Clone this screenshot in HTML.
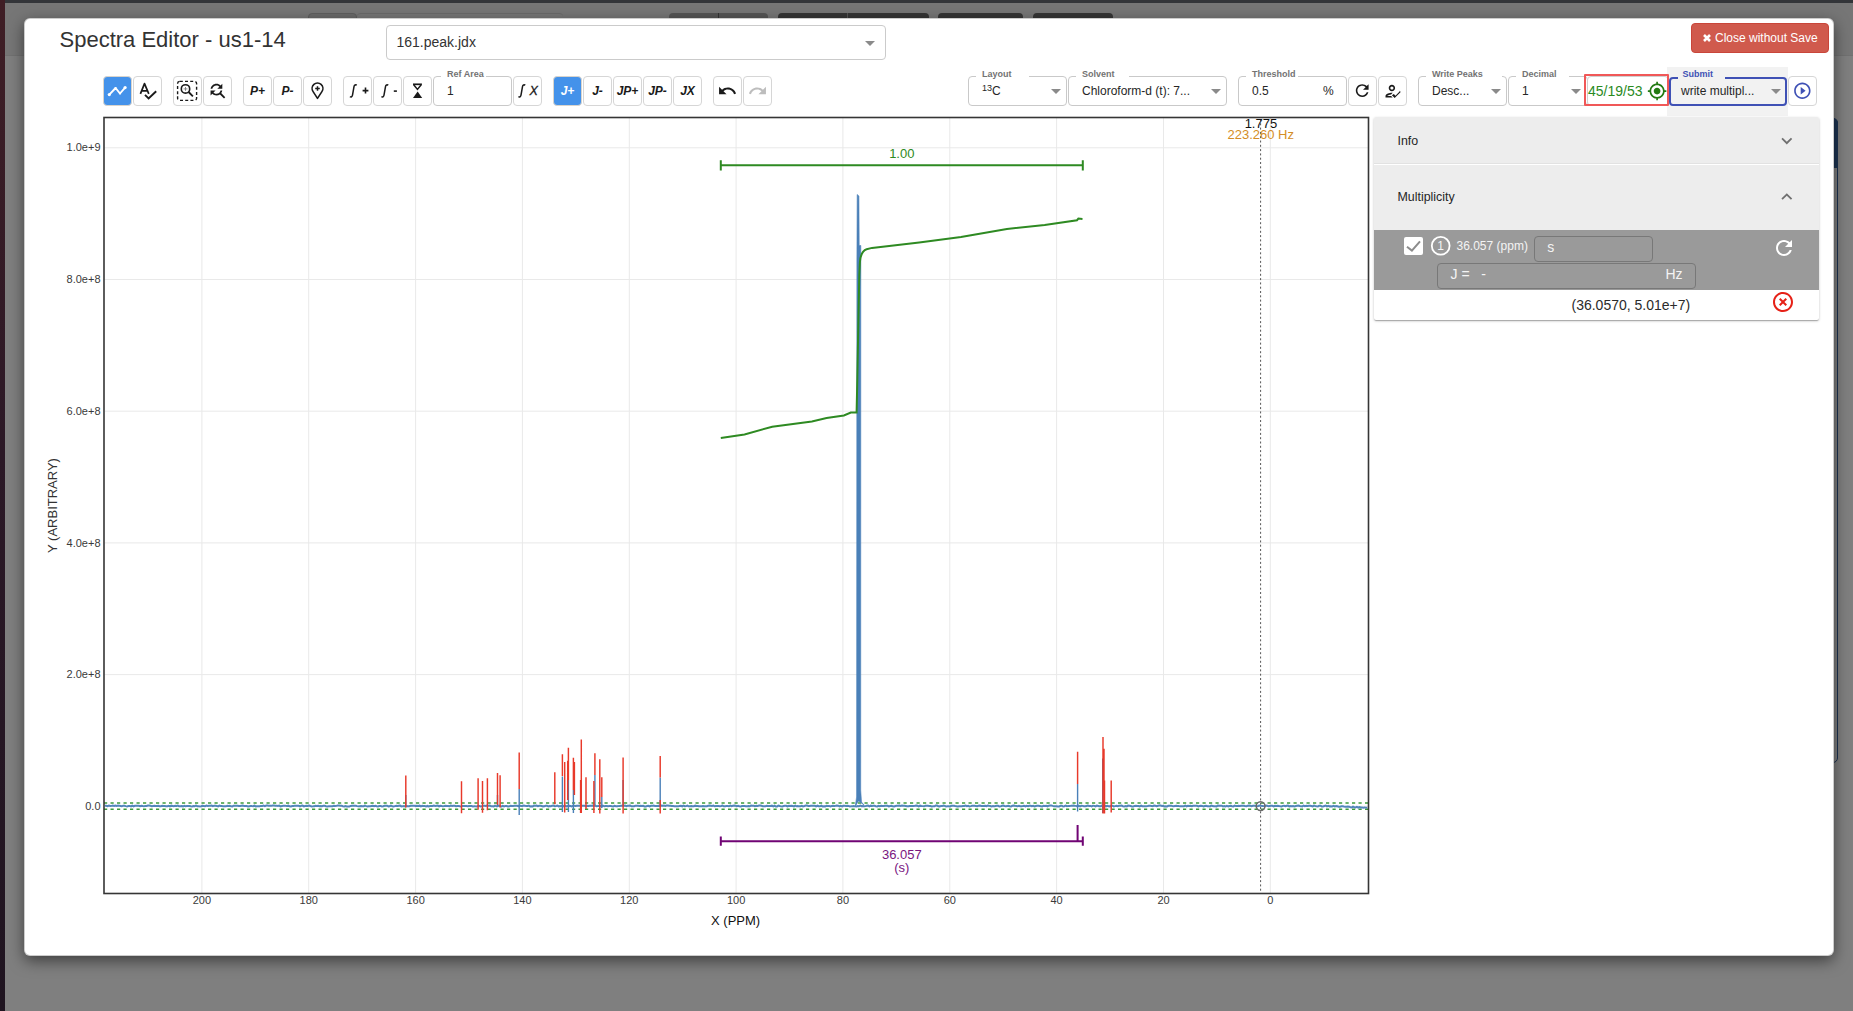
<!DOCTYPE html>
<html><head><meta charset="utf-8"><title>Spectra Editor</title>
<style>
*{box-sizing:border-box;margin:0;padding:0}
html,body{width:1853px;height:1011px;overflow:hidden}
body{position:relative;background:#7f7f7f;font-family:"Liberation Sans",sans-serif;color:#333}
.abs{position:absolute}
#lstrip{left:0;top:0;width:5px;height:1011px;background:linear-gradient(#3f1e25,#2b1826 45%,#1f1420)}
#topbar{left:5px;top:0;width:1848px;height:3px;background:#333539}
#hdrbg{left:5px;top:3px;width:1848px;height:52.5px;background:#767676;border-bottom:1px solid #717171}
.tab{top:13px;height:8px;border-radius:4px 4px 0 0}
#modal{left:24px;top:17.5px;width:1810px;height:938.5px;background:#fff;border-radius:6px;box-shadow:0 5px 15px rgba(0,0,0,.5);border:1px solid rgba(0,0,0,.2)}
#title{left:59.5px;top:26.5px;font-size:22px;line-height:25px;color:#333;white-space:nowrap}
#filesel{left:385.5px;top:24.5px;width:500px;height:35px;border:1px solid #cbcbcb;border-radius:4px;background:#fff}
#filesel span{position:absolute;left:10px;top:8px;font-size:14px;line-height:16px;color:#333}
.tri{position:absolute;width:0;height:0;border-left:5px solid transparent;border-right:5px solid transparent;border-top:5px solid #8a8a8a}
#closebtn{left:1691px;top:23px;width:138px;height:30px;background:#d05a4d;border:1px solid #c9463a;border-radius:4px;color:#fff;font-size:12px;line-height:14px}
#closebtn span{position:absolute;left:23px;top:6.5px;white-space:nowrap}

.btn{position:absolute;top:76px;width:29px;height:29.5px;border:1px solid #d6d6d6;border-radius:4px;background:#fff}
.btn svg{position:absolute;left:-1px;top:-1px}
.btn.on{background:#4492ea;border-color:#d9d4cc}
.bt{position:absolute;left:0;top:7px;width:27px;text-align:center;font:italic bold 12px/14px "Liberation Sans",sans-serif;color:#1a1a1a;white-space:nowrap}
.fld{position:absolute;top:76px;height:29.5px;border:1px solid #c9c9c9;border-radius:4px;background:#fff}
.lbl{position:absolute;top:-8px;font:bold 9px/10px "Liberation Sans",sans-serif;color:#737373;background:#fff;white-space:nowrap}
.notch{position:absolute;top:-2px;height:3px;background:#fff}
.val{position:absolute;top:7px;font:12px/14px "Liberation Sans",sans-serif;color:#262626;white-space:nowrap}
</style></head>
<body>
<div id="lstrip" class="abs"></div>
<div id="topbar" class="abs"></div>
<div id="hdrbg" class="abs"></div>
<div class="abs tab" style="left:308px;width:49px;background:#6a6a6a;border:1px solid #5e5e5e"></div>
<div class="abs tab" style="left:357px;width:206px;background:#777;border-top:1px solid #6a6a6a"></div>
<div class="abs tab" style="left:669px;width:99px;background:#555;background-image:linear-gradient(90deg,transparent 49.5px,#333 49.5px,#333 50.5px,transparent 50.5px)"></div>
<div class="abs tab" style="left:778px;width:151px;background:#353535;background-image:linear-gradient(90deg,transparent 69px,#555 69px,#555 70px,transparent 70px)"></div>
<div class="abs tab" style="left:938px;width:85px;background:#353535"></div>
<div class="abs tab" style="left:1033px;width:80px;background:#353535"></div>

<div class="abs" style="left:1700px;top:117.5px;width:137.8px;height:645px;border:1.5px solid #1d3453;border-radius:5px"></div>
<div class="abs" style="left:1700px;top:117.5px;width:137.8px;height:50.5px;background:#1d3453;border-radius:5px 5px 0 0"></div>
<div id="modal" class="abs"></div>
<div id="title" class="abs">Spectra Editor - us1-14</div>
<div id="filesel" class="abs"><span>161.peak.jdx</span><i class="tri" style="left:478px;top:15px"></i></div>
<div id="closebtn" class="abs"><svg style="position:absolute;left:10.5px;top:10px" width="8" height="8" viewBox="0 0 8 8"><path d="M1 1L7 7M7 1L1 7" stroke="#fff" stroke-width="2.6" stroke-linecap="butt"/></svg><span>Close without Save</span></div>

<!-- plot -->
<svg class="abs" style="left:0;top:0" width="1853" height="1011" viewBox="0 0 1853 1011">
<path d="M1270.3,118.0V893.0M1163.5,118.0V893.0M1056.6,118.0V893.0M949.8,118.0V893.0M842.9,118.0V893.0M736.1,118.0V893.0M629.3,118.0V893.0M522.4,118.0V893.0M415.6,118.0V893.0M308.7,118.0V893.0M201.9,118.0V893.0M104.5,806.3H1368.0M104.5,674.6H1368.0M104.5,542.9H1368.0M104.5,411.2H1368.0M104.5,279.5H1368.0M104.5,147.8H1368.0" stroke="#e9e9e9" stroke-width="1" fill="none"/>
<g font-family="Liberation Sans" font-size="11" fill="#3a3a3a" text-anchor="middle"><text x="1270.3" y="904">0</text><text x="1163.5" y="904">20</text><text x="1056.6" y="904">40</text><text x="949.8" y="904">60</text><text x="842.9" y="904">80</text><text x="736.1" y="904">100</text><text x="629.3" y="904">120</text><text x="522.4" y="904">140</text><text x="415.6" y="904">160</text><text x="308.7" y="904">180</text><text x="201.9" y="904">200</text></g>
<g font-family="Liberation Sans" font-size="11" fill="#3a3a3a" text-anchor="end"><text x="100.5" y="809.9">0.0</text><text x="100.5" y="678.2">2.0e+8</text><text x="100.5" y="546.5">4.0e+8</text><text x="100.5" y="414.8">6.0e+8</text><text x="100.5" y="283.1">8.0e+8</text><text x="100.5" y="151.4">1.0e+9</text></g>
<text x="735.6" y="924.6" font-family="Liberation Sans" font-size="13" fill="#111" text-anchor="middle">X (PPM)</text>
<text transform="translate(57.4,505.5) rotate(-90)" font-family="Liberation Sans" font-size="13" fill="#333" text-anchor="middle">Y (ARBITRARY)</text>
<path d="M104,803.1H1368.5M104,809.3H1368.5" stroke="#3d9a3d" stroke-width="1.5" stroke-dasharray="3.2,3.3" fill="none"/>
<polyline points="105.0,805.84 106.3,805.69 107.6,806.14 108.9,805.62 110.2,806.03 111.5,805.88 112.8,805.60 114.1,806.01 115.4,805.58 116.7,805.94 118.0,805.61 119.3,805.63 120.6,805.93 121.9,806.29 123.2,805.66 124.5,805.75 125.8,806.11 127.1,806.40 128.4,806.07 129.7,805.91 131.0,806.43 132.3,805.59 133.6,806.32 134.9,805.81 136.2,805.68 137.5,805.66 138.8,805.83 140.1,806.28 141.4,805.71 142.7,806.07 144.0,806.13 145.3,805.89 146.6,806.04 147.9,805.61 149.2,805.60 150.5,805.74 151.8,806.16 153.1,805.93 154.4,805.83 155.7,806.08 157.0,805.96 158.3,805.82 159.6,806.26 160.9,806.18 162.2,805.77 163.5,806.07 164.8,806.02 166.1,806.34 167.4,806.21 168.7,805.81 170.0,806.43 171.3,805.66 172.6,805.93 173.9,806.23 175.2,805.69 176.5,805.99 177.8,805.59 179.1,806.15 180.4,806.24 181.7,806.07 183.0,806.34 184.3,805.83 185.6,806.18 186.9,806.08 188.2,806.07 189.5,805.96 190.8,806.31 192.1,806.40 193.4,805.98 194.7,806.15 196.0,805.60 197.3,806.18 198.6,806.13 199.9,806.44 201.2,806.29 202.5,805.81 203.8,805.90 205.1,806.15 206.4,805.57 207.7,805.97 209.0,805.70 210.3,805.66 211.6,805.60 212.9,806.24 214.2,805.67 215.5,805.77 216.8,805.90 218.1,806.33 219.4,805.62 220.7,805.95 222.0,806.04 223.3,806.35 224.6,806.29 225.9,806.33 227.2,805.80 228.5,805.92 229.8,805.87 231.1,806.35 232.4,806.41 233.7,805.69 235.0,805.71 236.3,805.76 237.6,805.76 238.9,805.99 240.2,806.08 241.5,805.79 242.8,805.55 244.1,805.93 245.4,805.88 246.7,806.06 248.0,806.41 249.3,806.17 250.6,806.01 251.9,806.11 253.2,806.16 254.5,805.60 255.8,806.36 257.1,806.25 258.4,806.34 259.7,806.27 261.0,805.90 262.3,805.91 263.6,805.64 264.9,806.12 266.2,805.61 267.5,805.61 268.8,805.74 270.1,805.70 271.4,805.86 272.7,805.60 274.0,805.55 275.3,805.69 276.6,805.64 277.9,805.88 279.2,805.57 280.5,806.34 281.8,806.10 283.1,805.68 284.4,805.78 285.7,805.86 287.0,805.88 288.3,805.66 289.6,806.31 290.9,806.44 292.2,805.97 293.5,805.99 294.8,805.63 296.1,805.64 297.4,805.86 298.7,805.79 300.0,806.30 301.3,805.70 302.6,805.57 303.9,806.41 305.2,806.03 306.5,805.68 307.8,806.04 309.1,805.57 310.4,806.03 311.7,806.43 313.0,806.33 314.3,806.18 315.6,805.79 316.9,805.88 318.2,805.70 319.5,806.24 320.8,806.03 322.1,806.25 323.4,805.85 324.7,805.75 326.0,806.28 327.3,806.44 328.6,806.32 329.9,806.28 331.2,806.29 332.5,806.22 333.8,805.75 335.1,806.02 336.4,805.87 337.7,805.58 339.0,805.58 340.3,805.80 341.6,805.78 342.9,806.17 344.2,806.41 345.5,805.95 346.8,806.39 348.1,806.44 349.4,806.41 350.7,805.88 352.0,805.75 353.3,805.75 354.6,805.73 355.9,805.73 357.2,806.11 358.5,806.36 359.8,806.31 361.1,805.98 362.4,806.14 363.7,806.27 365.0,805.63 366.3,806.14 367.6,806.37 368.9,806.25 370.2,806.23 371.5,805.98 372.8,805.71 374.1,806.26 375.4,805.85 376.7,806.27 378.0,806.42 379.3,805.91 380.6,805.91 381.9,806.40 383.2,806.20 384.5,805.70 385.8,805.66 387.1,805.69 388.4,806.36 389.7,806.28 391.0,805.68 392.3,806.29 393.6,806.43 394.9,806.14 396.2,805.87 397.5,806.04 398.8,805.67 400.1,805.56 401.4,806.42 402.7,806.13 404.0,806.02 405.3,806.39 406.6,805.94 407.9,806.33 409.2,806.29 410.5,805.74 411.8,805.78 413.1,805.81 414.4,805.77 415.7,806.08 417.0,805.78 418.3,805.93 419.6,805.67 420.9,806.37 422.2,805.87 423.5,805.96 424.8,806.08 426.1,806.36 427.4,805.93 428.7,806.38 430.0,806.00 431.3,806.03 432.6,806.02 433.9,805.57 435.2,805.95 436.5,805.71 437.8,805.55 439.1,806.27 440.4,805.71 441.7,805.98 443.0,806.20 444.3,806.05 445.6,805.84 446.9,806.02 448.2,806.05 449.5,806.26 450.8,805.65 452.1,806.05 453.4,805.77 454.7,805.80 456.0,806.25 457.3,806.01 458.6,806.06 459.9,806.23 461.2,806.37 462.5,805.95 463.8,806.10 465.1,806.00 466.4,806.01 467.7,806.17 469.0,805.96 470.3,806.03 471.6,805.98 472.9,806.40 474.2,806.18 475.5,806.34 476.8,806.40 478.1,805.78 479.4,806.05 480.7,806.40 482.0,806.31 483.3,805.67 484.6,805.66 485.9,805.95 487.2,805.62 488.5,805.77 489.8,805.62 491.1,806.15 492.4,806.26 493.7,806.36 495.0,805.69 496.3,806.19 497.6,806.14 498.9,805.68 500.2,806.34 501.5,806.42 502.8,805.75 504.1,806.41 505.4,805.91 506.7,805.99 508.0,806.44 509.3,806.30 510.6,805.70 511.9,805.94 513.2,806.01 514.5,805.86 515.8,805.73 517.1,805.84 518.4,806.20 519.7,805.57 521.0,806.05 522.3,805.95 523.6,805.57 524.9,805.85 526.2,806.11 527.5,806.01 528.8,805.61 530.1,806.44 531.4,806.26 532.7,806.42 534.0,805.64 535.3,805.79 536.6,805.59 537.9,806.25 539.2,805.79 540.5,805.67 541.8,805.93 543.1,806.37 544.4,806.29 545.7,805.78 547.0,805.68 548.3,806.38 549.6,806.06 550.9,806.18 552.2,805.63 553.5,805.60 554.8,806.17 556.1,805.93 557.4,805.62 558.7,806.39 560.0,806.12 561.3,806.27 562.6,805.63 563.9,806.32 565.2,805.61 566.5,806.33 567.8,805.96 569.1,805.86 570.4,806.05 571.7,806.38 573.0,805.79 574.3,805.67 575.6,806.02 576.9,805.76 578.2,805.65 579.5,805.70 580.8,805.60 582.1,805.73 583.4,805.83 584.7,805.82 586.0,806.23 587.3,805.81 588.6,806.00 589.9,805.71 591.2,805.86 592.5,805.57 593.8,805.78 595.1,805.56 596.4,806.21 597.7,806.05 599.0,805.72 600.3,805.98 601.6,806.39 602.9,805.65 604.2,806.29 605.5,805.94 606.8,806.00 608.1,806.30 609.4,805.90 610.7,806.01 612.0,806.17 613.3,806.43 614.6,805.86 615.9,806.30 617.2,806.19 618.5,806.12 619.8,805.91 621.1,805.86 622.4,805.60 623.7,805.67 625.0,805.61 626.3,806.22 627.6,805.78 628.9,805.70 630.2,805.63 631.5,806.31 632.8,806.33 634.1,806.15 635.4,805.80 636.7,805.77 638.0,805.81 639.3,805.96 640.6,805.69 641.9,805.95 643.2,805.79 644.5,806.42 645.8,806.43 647.1,806.04 648.4,805.77 649.7,806.42 651.0,805.83 652.3,805.87 653.6,805.55 654.9,805.89 656.2,805.98 657.5,806.00 658.8,805.73 660.1,806.00 661.4,805.55 662.7,805.79 664.0,805.63 665.3,805.91 666.6,805.59 667.9,805.57 669.2,805.82 670.5,805.76 671.8,806.08 673.1,806.03 674.4,806.23 675.7,806.14 677.0,806.19 678.3,806.34 679.6,805.90 680.9,805.84 682.2,806.44 683.5,805.68 684.8,806.20 686.1,806.13 687.4,805.59 688.7,806.30 690.0,806.35 691.3,806.11 692.6,806.21 693.9,806.28 695.2,805.68 696.5,806.02 697.8,806.00 699.1,806.30 700.4,806.27 701.7,806.29 703.0,806.08 704.3,806.35 705.6,806.16 706.9,806.17 708.2,805.76 709.5,805.58 710.8,805.67 712.1,805.87 713.4,805.64 714.7,806.30 716.0,806.05 717.3,806.11 718.6,806.11 719.9,806.16 721.2,805.99 722.5,805.55 723.8,806.27 725.1,806.22 726.4,806.00 727.7,806.03 729.0,806.14 730.3,805.61 731.6,806.21 732.9,805.78 734.2,805.62 735.5,805.79 736.8,806.21 738.1,805.73 739.4,806.22 740.7,806.43 742.0,805.99 743.3,805.89 744.6,805.98 745.9,806.17 747.2,806.24 748.5,806.11 749.8,806.13 751.1,805.62 752.4,805.68 753.7,805.78 755.0,806.22 756.3,805.82 757.6,806.06 758.9,805.56 760.2,805.60 761.5,805.79 762.8,806.15 764.1,806.17 765.4,806.16 766.7,805.81 768.0,806.01 769.3,805.97 770.6,805.97 771.9,805.66 773.2,806.35 774.5,805.73 775.8,806.43 777.1,806.39 778.4,805.57 779.7,805.96 781.0,806.29 782.3,806.42 783.6,805.95 784.9,805.79 786.2,805.74 787.5,806.40 788.8,805.74 790.1,806.07 791.4,805.68 792.7,806.02 794.0,806.41 795.3,805.67 796.6,806.29 797.9,806.01 799.2,806.35 800.5,806.18 801.8,805.76 803.1,806.36 804.4,805.99 805.7,805.57 807.0,805.55 808.3,805.99 809.6,805.96 810.9,805.82 812.2,805.68 813.5,805.86 814.8,805.83 816.1,806.31 817.4,805.55 818.7,806.23 820.0,806.31 821.3,805.66 822.6,806.38 823.9,806.19 825.2,806.36 826.5,805.81 827.8,805.88 829.1,805.90 830.4,806.45 831.7,806.08 833.0,805.87 834.3,805.94 835.6,805.80 836.9,805.59 838.2,805.64 839.5,806.30 840.8,805.81 842.1,806.39 843.4,805.77 844.7,805.79 846.0,806.01 847.3,805.72 848.6,805.89 849.9,806.41 851.2,806.35 852.5,806.28 853.8,806.12 855.1,806.37 856.4,806.40 857.7,806.04 859.0,806.20 860.3,805.59 861.6,806.21 862.9,805.96 864.2,806.23 865.5,806.13 866.8,805.81 868.1,805.59 869.4,806.38 870.7,805.66 872.0,805.97 873.3,805.86 874.6,805.82 875.9,806.22 877.2,806.43 878.5,805.78 879.8,806.14 881.1,805.82 882.4,806.05 883.7,805.90 885.0,805.70 886.3,805.70 887.6,805.74 888.9,806.37 890.2,806.00 891.5,805.75 892.8,806.37 894.1,806.45 895.4,805.95 896.7,805.68 898.0,805.72 899.3,805.63 900.6,805.86 901.9,805.63 903.2,805.77 904.5,805.78 905.8,806.06 907.1,806.35 908.4,806.22 909.7,805.92 911.0,805.92 912.3,806.02 913.6,805.89 914.9,805.85 916.2,805.61 917.5,805.80 918.8,806.42 920.1,805.66 921.4,806.00 922.7,806.12 924.0,806.33 925.3,805.74 926.6,805.79 927.9,805.77 929.2,805.91 930.5,805.95 931.8,806.41 933.1,806.31 934.4,806.34 935.7,805.57 937.0,805.58 938.3,806.19 939.6,806.36 940.9,805.98 942.2,806.08 943.5,805.55 944.8,805.90 946.1,806.38 947.4,806.29 948.7,806.32 950.0,806.43 951.3,805.77 952.6,805.65 953.9,805.69 955.2,806.02 956.5,806.16 957.8,806.40 959.1,806.20 960.4,806.13 961.7,806.24 963.0,805.96 964.3,806.05 965.6,805.59 966.9,806.25 968.2,805.76 969.5,806.38 970.8,806.13 972.1,805.82 973.4,805.67 974.7,805.78 976.0,806.12 977.3,806.18 978.6,805.65 979.9,805.61 981.2,806.02 982.5,806.07 983.8,805.90 985.1,805.75 986.4,806.09 987.7,805.56 989.0,805.82 990.3,805.96 991.6,806.41 992.9,806.13 994.2,806.35 995.5,805.98 996.8,805.76 998.1,805.77 999.4,806.41 1000.7,806.18 1002.0,805.83 1003.3,805.57 1004.6,806.00 1005.9,806.16 1007.2,805.93 1008.5,805.78 1009.8,806.15 1011.1,806.38 1012.4,805.75 1013.7,805.58 1015.0,805.85 1016.3,805.93 1017.6,806.16 1018.9,805.73 1020.2,806.27 1021.5,806.22 1022.8,806.00 1024.1,805.73 1025.4,806.42 1026.7,805.83 1028.0,806.29 1029.3,805.76 1030.6,805.75 1031.9,806.23 1033.2,805.82 1034.5,806.41 1035.8,806.00 1037.1,805.72 1038.4,805.75 1039.7,805.93 1041.0,806.15 1042.3,806.40 1043.6,805.68 1044.9,805.90 1046.2,805.74 1047.5,806.43 1048.8,805.68 1050.1,805.60 1051.4,805.60 1052.7,805.90 1054.0,806.36 1055.3,806.35 1056.6,806.21 1057.9,806.45 1059.2,806.39 1060.5,805.85 1061.8,805.72 1063.1,806.39 1064.4,806.22 1065.7,805.58 1067.0,806.15 1068.3,805.89 1069.6,805.89 1070.9,805.85 1072.2,805.70 1073.5,805.55 1074.8,805.80 1076.1,805.87 1077.4,806.41 1078.7,805.66 1080.0,806.42 1081.3,805.74 1082.6,805.87 1083.9,806.29 1085.2,806.29 1086.5,805.94 1087.8,805.59 1089.1,805.98 1090.4,805.89 1091.7,806.38 1093.0,805.72 1094.3,805.88 1095.6,806.36 1096.9,805.58 1098.2,805.92 1099.5,806.28 1100.8,806.24 1102.1,805.59 1103.4,805.58 1104.7,805.61 1106.0,806.38 1107.3,805.78 1108.6,806.22 1109.9,806.36 1111.2,805.86 1112.5,805.80 1113.8,806.41 1115.1,806.11 1116.4,805.79 1117.7,806.19 1119.0,805.83 1120.3,805.80 1121.6,805.55 1122.9,806.23 1124.2,806.37 1125.5,806.12 1126.8,806.40 1128.1,805.57 1129.4,805.76 1130.7,805.98 1132.0,806.41 1133.3,806.41 1134.6,805.90 1135.9,805.78 1137.2,805.94 1138.5,805.99 1139.8,806.39 1141.1,805.71 1142.4,806.27 1143.7,806.21 1145.0,806.29 1146.3,806.25 1147.6,806.10 1148.9,805.85 1150.2,805.84 1151.5,805.88 1152.8,806.25 1154.1,805.62 1155.4,805.73 1156.7,806.23 1158.0,805.77 1159.3,805.61 1160.6,805.58 1161.9,806.05 1163.2,805.84 1164.5,806.43 1165.8,806.35 1167.1,806.44 1168.4,805.79 1169.7,805.63 1171.0,805.64 1172.3,806.00 1173.6,806.19 1174.9,805.95 1176.2,805.76 1177.5,805.93 1178.8,806.11 1180.1,806.16 1181.4,806.22 1182.7,806.31 1184.0,806.15 1185.3,805.66 1186.6,806.31 1187.9,805.81 1189.2,806.06 1190.5,805.89 1191.8,806.21 1193.1,805.73 1194.4,805.77 1195.7,805.77 1197.0,805.69 1198.3,806.35 1199.6,806.07 1200.9,805.84 1202.2,805.91 1203.5,806.44 1204.8,806.01 1206.1,805.76 1207.4,806.28 1208.7,806.14 1210.0,806.44 1211.3,805.64 1212.6,805.98 1213.9,806.29 1215.2,806.31 1216.5,806.37 1217.8,805.59 1219.1,805.81 1220.4,805.66 1221.7,805.72 1223.0,806.43 1224.3,806.07 1225.6,806.39 1226.9,805.89 1228.2,806.33 1229.5,805.95 1230.8,805.78 1232.1,806.25 1233.4,806.40 1234.7,805.65 1236.0,806.09 1237.3,806.11 1238.6,805.75 1239.9,805.88 1241.2,805.68 1242.5,805.73 1243.8,805.78 1245.1,806.09 1246.4,806.14 1247.7,805.73 1249.0,805.56 1250.3,805.84 1251.6,806.16 1252.9,805.72 1254.2,805.83 1255.5,805.73 1256.8,806.27 1258.1,806.04 1259.4,805.61 1260.7,805.64 1262.0,805.91 1263.3,806.05 1264.6,806.13 1265.9,805.63 1267.2,805.70 1268.5,806.18 1269.8,805.92 1271.1,805.80 1272.4,805.83 1273.7,806.41 1275.0,805.83 1276.3,806.06 1277.6,805.87 1278.9,805.92 1280.2,806.33 1281.5,806.45 1282.8,805.88 1284.1,805.73 1285.4,806.21 1286.7,805.73 1288.0,805.56 1289.3,806.36 1290.6,805.93 1291.9,806.29 1293.2,805.92 1294.5,806.34 1295.8,805.96 1297.1,805.70 1298.4,805.56 1299.7,806.05 1301.0,806.13 1302.3,806.37 1303.6,805.63 1304.9,806.11 1306.2,805.88 1307.5,806.00 1308.8,805.68 1310.1,805.80 1311.4,806.02 1312.7,806.38 1314.0,805.65 1315.3,805.99 1316.6,806.27 1317.9,806.42 1319.2,805.73 1320.5,805.66 1321.8,806.40 1323.1,806.43 1324.4,805.98 1325.7,805.60 1327.0,806.38 1328.3,805.90 1329.6,806.36 1330.9,806.15 1332.2,806.40 1333.5,805.86 1334.8,806.48 1336.1,806.04 1337.4,806.26 1338.7,806.72 1340.0,806.77 1341.3,806.25 1342.6,806.34 1343.9,806.57 1345.2,806.74 1346.5,806.68 1347.8,806.50 1349.1,806.68 1350.4,807.17 1351.7,807.39 1353.0,806.68 1354.3,807.21 1355.6,807.44 1356.9,806.86 1358.2,807.64 1359.5,807.05 1360.8,807.55 1362.1,807.57 1363.4,807.70 1364.7,807.47 1366.0,807.63 1367.3,807.84" fill="none" stroke="#4a80b8" stroke-width="2" stroke-opacity="0.95"/>
<path d="M519.2,789V815M562.4,776.5V812M568.4,780V812M573.4,790V813M594.9,775V805M601.8,797V808M623.1,780V806M660.2,777.5V806M1077.6,784V811.5M1102.7,758.6V813M497.5,795V806M405.8,795V806" stroke="#4a80b8" stroke-width="1.4" fill="none"/>
<path d="M855.2,806.5 L856.6,797 L856.9,260 L857.2,194.5 L858.9,196 L859.2,245.5 L860.8,245.5 L860.7,790 L861.5,802 L864,805 L858.5,801 Z" fill="#4a80b8" stroke="#4a80b8" stroke-width="0.6"/>
<path d="M405.8,775.5V807.6M461.5,781.2V813.3M478.1,778.2V809.7M482.5,780.9V812.7M487.4,778.2V810.3M497.5,773.1V804.8M500.1,775.3V807.6M519.2,752.4V789M554.8,772.3V804.2M562.4,754.2V776M564.7,762.1V812.6M567.7,760.7V800M568.4,747.8V780M573.4,757.7V790M574.4,762.1V795M580.6,780V813M581.3,739.4V813M586,777.3V809M593.9,781V813M594.9,753.2V775M599.8,759.2V813.6M601.8,777.3V797M623.1,757.5V813.6M660.2,755.9V777.5M660.2,800V813.6M1077.6,751.7V783.9M1103,736.9V813.5M1104,748.7V790M1104.5,780.4V813.5M1111.2,780.4V812.5" stroke="#e8392a" stroke-width="1.45" fill="none"/>
<path d="M720.8,437.9 L744.5,434.5 L772.2,426.7 L811.9,421.5 L826.6,418.1 L843.9,415.5 L850.8,412.6 L856.6,412.6 L857.3,380 L858.4,320 L859.3,275 L859.9,262 C860.6,254 862.5,250.5 866.6,249.2 L872,247.9 L919.2,242.5 L961,237.1 L1006.9,229 L1044.7,225 L1077,220.2 L1078.4,218.6 L1082.5,218.9" fill="none" stroke="#2e8a22" stroke-width="2"/>
<path d="M720.8,165.3H1082.8M720.8,160.2V170.5M1082.8,160.2V170.5" stroke="#2e8a22" stroke-width="2" fill="none"/>
<text x="901.8" y="158" font-family="Liberation Sans" font-size="13" fill="#2e8a22" text-anchor="middle">1.00</text>
<path d="M720.8,841.2H1082.8M720.8,836.5V845.8M1082.8,836.5V845.8M1077.6,825V841.2" stroke="#700474" stroke-width="2" fill="none"/>
<g font-family="Liberation Sans" font-size="13" fill="#7a1480" text-anchor="middle"><text x="901.8" y="859">36.057</text><text x="901.8" y="871.8">(s)</text></g>
<path d="M1260.6,119V892.5" stroke="#555" stroke-width="1" stroke-dasharray="2,2.3" fill="none"/>
<circle cx="1260.6" cy="806.1" r="4.4" fill="none" stroke="#6a6a6a" stroke-width="1.5"/>
<text x="1260.9" y="128" font-family="Liberation Sans" font-size="13" fill="#111" text-anchor="middle">1.775</text>
<text x="1260.7" y="139" font-family="Liberation Sans" font-size="13" fill="#d48d26" text-anchor="middle">223.260 Hz</text>
<rect x="104" y="117.5" width="1264.5" height="776.0" fill="none" stroke="#353535" stroke-width="1.6"/>
</svg>
<!-- /plot -->
<!-- toolbar -->
<div class="btn on" style="left:103px"><svg width="29" height="29" viewBox="0 0 29 29"><polyline points="6.3,18.6 12.6,12 17,17.5 22.1,11.6" fill="none" stroke="#fff" stroke-width="1.9" stroke-linejoin="round"/><circle cx="6.3" cy="18.6" r="1.6" fill="#fff"/><circle cx="22.1" cy="11.6" r="1.6" fill="#fff"/><circle cx="12.6" cy="12" r="1.1" fill="#fff"/><circle cx="17" cy="17.5" r="1.1" fill="#fff"/></svg></div>
<div class="btn" style="left:133px"><svg width="29" height="29" viewBox="0 0 29 29"><path d="M7.4,17.9 L11.5,7.6 L15.8,17.8 M9.1,14.8 H14.1" fill="none" stroke="#1a1a1a" stroke-width="1.7" stroke-linejoin="round"/><path d="M12,18.9 L15.6,22.4 L23.2,15.2" fill="none" stroke="#1a1a1a" stroke-width="1.9"/></svg></div>
<div class="btn" style="left:173px"><svg width="29" height="29" viewBox="0 0 29 29"><rect x="4.6" y="5.4" width="19" height="19" rx="2.2" fill="none" stroke="#1a1a1a" stroke-width="1.4" stroke-dasharray="3,2.2"/><circle cx="12.5" cy="12.9" r="4.2" fill="none" stroke="#1a1a1a" stroke-width="1.6"/><path d="M15.6,16 L19.9,20.4" stroke="#1a1a1a" stroke-width="1.8"/><path d="M12.5,11 V14.8 M10.6,12.9 H14.4" stroke="#777" stroke-width="0.9"/></svg></div>
<div class="btn" style="left:203px"><svg width="29" height="29" viewBox="0 0 29 29"><g transform="translate(4.2,4.4) scale(0.84)"><path fill="#1a1a1a" d="M11 6c1.38 0 2.63.56 3.54 1.46L12 10h6V4l-2.05 2.05C14.68 4.78 12.93 4 11 4c-3.53 0-6.43 2.61-6.92 6H6.1c.46-2.28 2.48-4 4.9-4zm5.64 9.14c.66-.9 1.12-1.97 1.28-3.14H15.9c-.46 2.28-2.48 4-4.9 4-1.38 0-2.63-.56-3.54-1.46L10 12H4v6l2.05-2.05C7.32 17.22 9.07 18 11 18c1.55 0 2.98-.51 4.14-1.36L20 21.49 21.49 20l-4.85-4.86z"/></g></svg></div>
<div class="btn" style="left:243px"><span class="bt">P+</span></div>
<div class="btn" style="left:273px"><span class="bt">P-</span></div>
<div class="btn" style="left:303px"><svg width="29" height="29" viewBox="0 0 29 29"><path d="M14.5,22.4 L10.1,15.6 A5.4,5.4 0 1 1 18.9,15.6 Z" fill="none" stroke="#1a1a1a" stroke-width="1.6" stroke-linejoin="round"/><path d="M12.2,12.5 H16.8 M14.5,10.2 V14.8" stroke="#1a1a1a" stroke-width="1.5"/></svg></div>
<div class="btn" style="left:343px"><svg width="29" height="29" viewBox="0 0 29 29"><path d="M13.8,9.2 C12.7,8.5 11.3,9.0 11.0,10.6 L9.5,19.2 C9.2,20.8 8.1,21.3 6.9,20.6" fill="none" stroke="#1a1a1a" stroke-width="1.5"/><path d="M19.6,14.6 H25.4 M22.5,11.6 V17.6" stroke="#1a1a1a" stroke-width="1.6"/></svg></div>
<div class="btn" style="left:373px"><svg width="29" height="29" viewBox="0 0 29 29"><path d="M15.3,9.2 C14.2,8.5 12.8,9.0 12.5,10.6 L11.0,19.2 C10.7,20.8 9.6,21.3 8.4,20.6" fill="none" stroke="#1a1a1a" stroke-width="1.5"/><path d="M20.8,15.1 H23.9" stroke="#1a1a1a" stroke-width="1.6"/></svg></div>
<div class="btn" style="left:403px"><svg width="29" height="29" viewBox="0 0 29 29"><path d="M10,8.3 H18.9" stroke="#1a1a1a" stroke-width="1.7"/><path d="M10.7,8.8 L14.45,13.4 L18.2,8.8" fill="none" stroke="#1a1a1a" stroke-width="1.5"/><path d="M10,21.9 L14.6,15.5 L19.2,21.9 Z" fill="#1a1a1a"/></svg></div>
<div class="fld" style="left:433px;width:79px"><i class="notch" style="left:7px;width:45px"></i><span class="lbl" style="left:13px">Ref Area</span><span class="val" style="left:13px">1</span></div>
<div class="btn" style="left:513px"><svg width="29" height="29" viewBox="0 0 29 29"><path d="M12.3,9.2 C11.2,8.5 9.8,9.0 9.5,10.6 L8.0,19.2 C7.7,20.8 6.6,21.3 5.4,20.6" fill="none" stroke="#1a1a1a" stroke-width="1.5"/><text x="16.6" y="19.4" font-family="Liberation Sans" font-style="italic" font-size="12.5" fill="#1a1a1a" stroke="#1a1a1a" stroke-width="0.3">X</text></svg></div>
<div class="btn on" style="left:553px"><span class="bt" style="color:#fff">J+</span></div>
<div class="btn" style="left:583px"><span class="bt">J-</span></div>
<div class="btn" style="left:613px"><span class="bt">JP+</span></div>
<div class="btn" style="left:643px"><span class="bt">JP-</span></div>
<div class="btn" style="left:673px"><span class="bt">JX</span></div>
<div class="btn" style="left:713px"><svg width="29" height="29" viewBox="0 0 29 29"><g transform="translate(4.4,4.9) scale(0.83)"><path fill="#1a1a1a" d="M12.5 8c-2.65 0-5.05.99-6.9 2.6L2 7v9h9l-3.62-3.62c1.39-1.16 3.16-1.88 5.12-1.88 3.54 0 6.55 2.31 7.6 5.5l2.37-.78C21.08 11.03 17.15 8 12.5 8z"/></g></svg></div>
<div class="btn" style="left:743px"><svg width="29" height="29" viewBox="0 0 29 29"><g transform="translate(24.6,4.9) scale(-0.83,0.83)"><path fill="#bdbdbd" d="M12.5 8c-2.65 0-5.05.99-6.9 2.6L2 7v9h9l-3.62-3.62c1.39-1.16 3.16-1.88 5.12-1.88 3.54 0 6.55 2.31 7.6 5.5l2.37-.78C21.08 11.03 17.15 8 12.5 8z"/></g></svg></div>

<!-- right toolbar -->
<div class="fld" style="left:968px;width:99px"><i class="notch" style="left:7px;width:53px"></i><span class="lbl" style="left:13px">Layout</span><span class="val" style="left:13px"><sup style="font-size:9px;vertical-align:0;position:relative;top:-4px">13</sup>C</span><i class="tri" style="left:81.5px;top:11.5px;border-top-color:#8a8a8a"></i></div>
<div class="fld" style="left:1068px;width:159px"><i class="notch" style="left:7px;width:53px"></i><span class="lbl" style="left:13px">Solvent</span><span class="val" style="left:13px">Chloroform-d (t): 7...</span><i class="tri" style="left:141.5px;top:11.5px;border-top-color:#8a8a8a"></i></div>
<div class="fld" style="left:1238px;width:109px"><i class="notch" style="left:7px;width:52px"></i><span class="lbl" style="left:13px">Threshold</span><span class="val" style="left:13px">0.5</span><span class="val" style="left:84px">%</span></div>
<div class="btn" style="left:1348px"><svg width="29" height="29" viewBox="0 0 29 29"><g transform="translate(4.6,5) scale(0.8)"><path fill="#1a1a1a" d="M17.65 6.35C16.2 4.9 14.21 4 12 4c-4.42 0-7.99 3.58-7.99 8s3.57 8 7.99 8c3.73 0 6.84-2.55 7.73-6h-2.08c-.82 2.33-3.04 4-5.65 4-3.31 0-6-2.69-6-6s2.69-6 6-6c1.66 0 3.14.69 4.22 1.78L13 11h7V4l-2.35 2.35z"/></g></svg></div>
<div class="btn" style="left:1378px"><svg width="29" height="29" viewBox="0 0 29 29"><g transform="translate(6.7,5.6) scale(0.8)"><path fill="#1a1a1a" d="M9 12c2.21 0 4-1.79 4-4s-1.79-4-4-4-4 1.79-4 4 1.79 4 4 4zm0-6c1.1 0 2 .9 2 2s-.9 2-2 2-2-.9-2-2 .9-2 2-2zm-6 12c.2-.63 2.57-1.68 4.96-1.94l2.04-2c-.39-.04-.68-.06-1-.06-2.67 0-8 1.34-8 4v2h9l-2-2H3zm15.6-5.5l-5.13 5.17-2.07-2.08L9 17l3.47 3.5L20 13l-1.4-1.5z"/></g></svg></div>
<div class="fld" style="left:1418px;width:89px"><i class="notch" style="left:7px;width:76px"></i><span class="lbl" style="left:13px">Write Peaks</span><span class="val" style="left:13px">Desc...</span><i class="tri" style="left:72px;top:11.5px;border-top-color:#8a8a8a"></i></div>
<div class="fld" style="left:1508px;width:80px"><i class="notch" style="left:7px;width:53px"></i><span class="lbl" style="left:13px">Decimal</span><span class="val" style="left:13px">1</span><i class="tri" style="left:62px;top:11.5px;border-top-color:#8a8a8a"></i></div>
<div class="abs" style="left:1587px;top:76px;width:82px;height:29.5px;border:1px solid #d0d0d0;border-radius:4px;background:#fff"></div>
<span class="abs" style="left:1588px;top:83px;font:14px/16px 'Liberation Sans',sans-serif;color:#2a8a1e;white-space:nowrap">45/19/53</span>
<svg class="abs" style="left:1647.3px;top:80.6px" width="20.2" height="20.2" viewBox="0 0 24 24"><path fill="#237a12" d="M12 8c-2.21 0-4 1.79-4 4s1.79 4 4 4 4-1.79 4-4-1.79-4-4-4zm8.94 3c-.46-4.17-3.77-7.48-7.94-7.94V1h-2v2.06C6.83 3.52 3.52 6.83 3.06 11H1v2h2.06c.46 4.17 3.77 7.48 7.94 7.94V23h2v-2.06c4.17-.46 7.48-3.77 7.94-7.94H23v-2h-2.06zM12 19c-3.87 0-7-3.13-7-7s3.13-7 7-7 7 3.13 7 7-3.13 7-7 7z"/></svg>
<div class="abs" style="left:1667px;top:67px;width:120.5px;height:48.5px;background:#f2f2f2"></div>
<div class="abs" style="left:1583.5px;top:74.3px;width:85.5px;height:32px;border:2px solid #f05858;border-radius:1px"></div>
<div class="fld" style="left:1668.5px;top:76.5px;width:118.5px;height:29px;border:2px solid #3f51b5;background:#f2f2f2"><i class="notch" style="left:7px;width:47px;background:#f2f2f2;top:-3px"></i><span class="lbl" style="left:12px;color:#3f51b5;background:#f2f2f2;top:-10px">Submit</span><span class="val" style="left:10.5px;top:5.4px">write multipl...</span><i class="tri" style="left:100px;top:10.5px;border-top-color:#8a8a8a"></i></div>
<div class="btn" style="left:1788px"><svg width="29" height="29" viewBox="0 0 29 29"><g transform="translate(4.5,4.9) scale(0.82)"><path fill="#3f51b5" d="M10 16.5l6-4.5-6-4.5v9zM12 2C6.48 2 2 6.48 2 12s4.48 10 10 10 10-4.48 10-10S17.52 2 12 2zm0 18c-4.41 0-8-3.59-8-8s3.59-8 8-8 8 3.59 8 8-3.59 8-8 8z"/></g></svg></div>

<!-- panel -->
<div class="abs" style="left:1373.8px;top:116.5px;width:444.8px;height:203px;background:#fff;border-radius:2px;box-shadow:0 1px 3px rgba(0,0,0,.2),0 1px 1px rgba(0,0,0,.14),0 2px 1px -1px rgba(0,0,0,.12)"></div>
<div class="abs" style="left:1373.8px;top:116.5px;width:444.8px;height:47.8px;background:#ededed;border-radius:2px 2px 0 0;border-bottom:1px solid #e2e2e2"></div>
<div class="abs" style="left:1373.8px;top:165.3px;width:444.8px;height:64.5px;background:#ededed"></div>
<span class="abs" style="left:1397.5px;top:134px;font:12.4px/14px 'Liberation Sans',sans-serif;color:#262626">Info</span>
<span class="abs" style="left:1397.5px;top:189.9px;font:12.4px/14px 'Liberation Sans',sans-serif;color:#262626">Multiplicity</span>
<svg class="abs" style="left:1775.7px;top:130.3px" width="21.6" height="21.6" viewBox="0 0 24 24"><path fill="#707070" d="M16.59 8.59L12 13.17 7.41 8.59 6 10l6 6 6-6z"/></svg>
<svg class="abs" style="left:1775.7px;top:186px" width="21.6" height="21.6" viewBox="0 0 24 24"><path fill="#707070" d="M12 8l-6 6 1.41 1.41L12 10.83l4.59 4.58L18 14z"/></svg>
<div class="abs" style="left:1373.8px;top:229.8px;width:444.8px;height:59.8px;background:#9a9a9a"></div>
<div class="abs" style="left:1404.3px;top:236.9px;width:18.5px;height:18.2px;background:#fff;border-radius:2px"></div>
<svg class="abs" style="left:1400px;top:234px" width="26" height="24" viewBox="0 0 26 24"><path d="M7,12.7 L11.9,16.6 L20,7.4" fill="none" stroke="#8c8c8c" stroke-width="2"/></svg>
<svg class="abs" style="left:1430px;top:235px" width="22" height="22" viewBox="0 0 22 22"><circle cx="10.7" cy="10.8" r="8.9" fill="none" stroke="#fff" stroke-width="1.8"/></svg>
<span class="abs" style="left:1437.3px;top:238.6px;font:12px/14px 'Liberation Sans',sans-serif;color:#f4f4f4">1</span>
<span class="abs" style="left:1456.5px;top:238.6px;font:12px/14px 'Liberation Sans',sans-serif;color:#f4f4f4;white-space:nowrap">36.057 (ppm)</span>
<div class="abs" style="left:1533.8px;top:236.3px;width:119.2px;height:25.9px;border:1px solid #787878;border-radius:4px"></div>
<span class="abs" style="left:1547.3px;top:239.2px;font:14px/16px 'Liberation Sans',sans-serif;color:#f4f4f4">s</span>
<div class="abs" style="left:1436.9px;top:263.3px;width:259px;height:25.9px;border:1px solid #787878;border-radius:4px"></div>
<span class="abs" style="left:1450.5px;top:265.8px;font:14px/16px 'Liberation Sans',sans-serif;color:#f4f4f4;white-space:pre">J =   -</span>
<span class="abs" style="left:1665.5px;top:265.8px;font:14px/16px 'Liberation Sans',sans-serif;color:#f4f4f4">Hz</span>
<svg class="abs" style="left:1771.7px;top:235.7px" width="24" height="24" viewBox="0 0 24 24"><path fill="#fff" d="M17.65 6.35C16.2 4.9 14.21 4 12 4c-4.42 0-7.99 3.58-7.99 8s3.57 8 7.99 8c3.73 0 6.84-2.55 7.73-6h-2.08c-.82 2.33-3.04 4-5.65 4-3.31 0-6-2.69-6-6s2.69-6 6-6c1.66 0 3.14.69 4.22 1.78L13 11h7V4l-2.35 2.35z"/></svg>
<span class="abs" style="left:1571.5px;top:296.7px;font:14px/16px 'Liberation Sans',sans-serif;color:#2b2b2b;white-space:nowrap">(36.0570, 5.01e+7)</span>
<svg class="abs" style="left:1770.6px;top:289.7px" width="24" height="24" viewBox="0 0 24 24"><path fill="#e62117" d="M14.59 8L12 10.59 9.41 8 8 9.41 10.59 12 8 14.59 9.41 16 12 13.41 14.59 16 16 14.59 13.41 12 16 9.41 14.59 8zM12 2C6.47 2 2 6.47 2 12s4.47 10 10 10 10-4.47 10-10S17.53 2 12 2zm0 18c-4.41 0-8-3.59-8-8s3.59-8 8-8 8 3.59 8 8-3.59 8-8 8z"/></svg>
<!-- /panel -->

</body></html>
